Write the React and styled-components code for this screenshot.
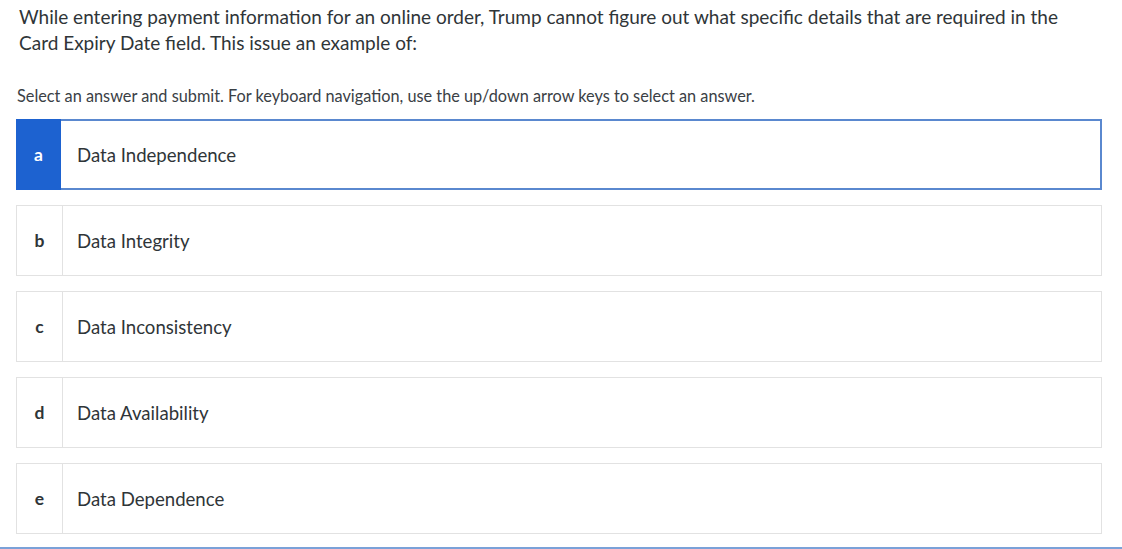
import React, { useState } from "react";
import styled, { createGlobalStyle } from "styled-components";

const GlobalStyle = createGlobalStyle`
	body {
		margin: 0;
		background: #fff;
		font-family: Lato, "Noto Sans", sans-serif;
		color: #333a40;
	}
`;

const Page = styled.div`
	padding: 0 20px 0 16px;
`;

const Question = styled.p`
	margin: 0;
	padding: 4px 40px 0 3px;
	font-size: 19px;
	line-height: 26px;
	color: #2f3538;
`;

const Hint = styled.p`
	margin: 30px 0 0 1px;
	font-size: 16.3px;
	line-height: 20px;
	color: #3a4045;
`;

const Options = styled.ul`
	list-style: none;
	margin: 13px 0 0;
	padding: 0;
	display: flex;
	flex-direction: column;
	gap: 15px;
`;

const Option = styled.li`
	display: flex;
	height: 71px;
	box-sizing: border-box;
	border: ${(p) => (p.$selected ? "2px solid #5a88cf" : "1.5px solid #e2e2e2")};
	background: #fff;
	cursor: pointer;
`;

const Letter = styled.span`
	width: 45px;
	flex-shrink: 0;
	display: flex;
	align-items: center;
	justify-content: center;
	font-weight: 700;
	font-size: 17.5px;
	background: ${(p) => (p.$selected ? "#1d62d0" : "#fff")};
	color: ${(p) => (p.$selected ? "#fff" : "#2f3538")};
	border-right: ${(p) => (p.$selected ? "none" : "1.5px solid #e2e2e2")};
	margin: ${(p) => (p.$selected ? "-2px 0 -2px -2px" : "0")};
`;

const Label = styled.span`
	display: flex;
	align-items: center;
	padding-left: ${(p) => (p.$selected ? "16px" : "14px")};
	font-size: 18.6px;
	color: #2f3538;
`;

const Footer = styled.div`
	margin-top: 13px;
	border-top: 2px solid #7ba1d8;
	height: 10px;
`;

const answers = [
	["a", "Data Independence"],
	["b", "Data Integrity"],
	["c", "Data Inconsistency"],
	["d", "Data Availability"],
	["e", "Data Dependence"],
];

const App = () => {
	const [selected, setSelected] = useState("a");

	return (
		<>
			<GlobalStyle />
			<Page>
				<Question>
					While entering payment information for an online order, Trump cannot figure out what specific
					details that are required in the Card Expiry Date field. This issue an example of:
				</Question>
				<Hint>
					Select an answer and submit. For keyboard navigation, use the up/down arrow keys to select an
					answer.
				</Hint>
				<Options>
					{answers.map(([key, text]) => (
						<Option key={key} $selected={selected === key} onClick={() => setSelected(key)}>
							<Letter $selected={selected === key}>{key}</Letter>
							<Label $selected={selected === key}>{text}</Label>
						</Option>
					))}
				</Options>
			</Page>
			<Footer />
		</>
	);
};

export default App;
